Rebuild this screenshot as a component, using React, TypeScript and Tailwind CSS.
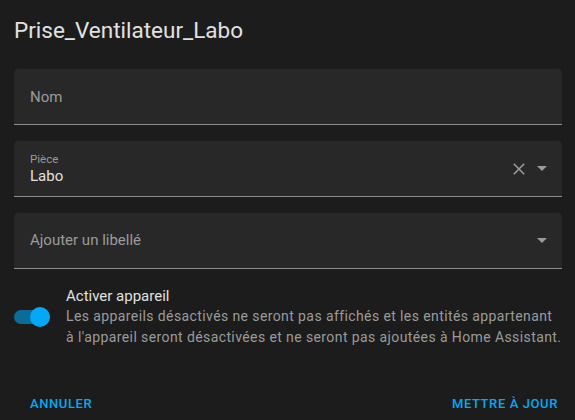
function Arrow() {
  return (
    <svg width="10" height="5" viewBox="0 0 10 5" className="mr-[1px] shrink-0">
      <path d="M0 0h10L5 5z" fill="#9b9b9b" />
    </svg>
  );
}

function Field({ label, value, clear }: { label: string; value?: string; clear?: boolean }) {
  return (
    <div className="flex h-[56px] items-center rounded-t-[4px] border-b border-[#8c8c8c] bg-[#282828] pl-4 pr-[14px]">
      <div className="flex-1">
        {value ? (
          <div className="flex flex-col">
            <span className="text-[11.5px] leading-[14px] text-[#9b9b9b]">{label}</span>
            <span className="text-[15px] leading-[20px] text-[#e1e1e1]">{value}</span>
          </div>
        ) : (
          <span className="text-[15px] text-[#9b9b9b]">{label}</span>
        )}
      </div>
      {clear && (
        <svg width="12" height="12" viewBox="0 0 12 12" className="mr-[12px] shrink-0">
          <path d="M0.8 0.8L11.2 11.2M11.2 0.8L0.8 11.2" stroke="#9b9b9b" strokeWidth="1.6" />
        </svg>
      )}
      {value !== undefined && <Arrow />}
    </div>
  );
}

export default function App() {
  return (
    <div className="h-[420px] w-[575px] bg-[#1c1c1c] px-[14px] font-['Roboto',sans-serif]">
      <h1 className="pt-[16px] text-[22.5px] leading-[28px] text-[#e1e1e1]">Prise_Ventilateur_Labo</h1>

      <div className="mt-[25px] mr-[-1px] flex flex-col gap-[16px]">
        <Field label="Nom" />
        <Field label="Pièce" value="Labo" clear />
        <div className="flex h-[56px] items-center rounded-t-[4px] border-b border-[#8c8c8c] bg-[#282828] pl-4 pr-[14px]">
          <span className="flex-1 text-[15px] text-[#9b9b9b]">Ajouter un libellé</span>
          <Arrow />
        </div>
      </div>

      <div className="mt-[17px] mr-[-8px] flex items-center gap-4">
        <div className="relative h-[14px] w-[36px] shrink-0">
          <div className="h-[14px] w-[36px] rounded-full bg-[#0b6c99]" />
          <div className="absolute right-0 top-[-3px] h-[20px] w-[20px] rounded-full bg-[#03a9f4]" />
        </div>
        <div>
          <div className="text-[15px] leading-[20px] text-[#e1e1e1]">Activer appareil</div>
          <div className="whitespace-nowrap text-[14px] leading-[21px] tracking-[0.4px] text-[#9b9b9b]">
            Les appareils désactivés ne seront pas affichés et les entités appartenant
            <br />
            à l'appareil seront désactivées et ne seront pas ajoutées à Home Assistant.
          </div>
        </div>
      </div>

      <div className="mt-[46px] flex justify-between px-[16px]">
        <button className="text-[13px] font-medium tracking-[0.6px] text-[#03a9f4]">ANNULER</button>
        <button className="mr-[-13px] text-[13px] font-medium tracking-[0.6px] text-[#03a9f4]">METTRE À JOUR</button>
      </div>
    </div>
  );
}
